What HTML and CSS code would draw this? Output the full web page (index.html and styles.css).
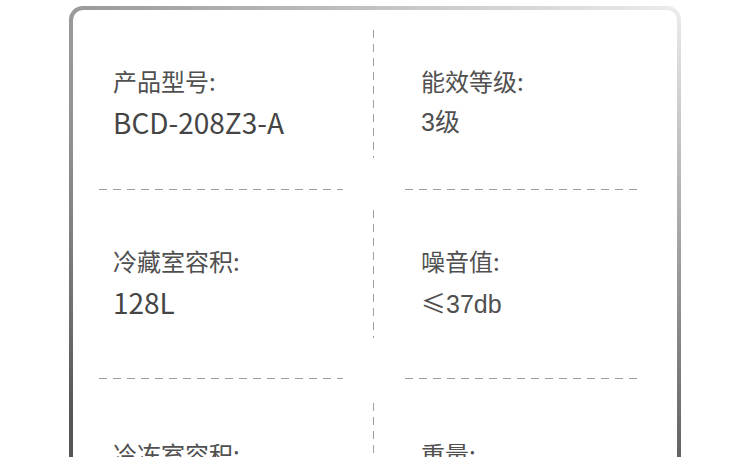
FILE: index.html
```html
<!DOCTYPE html>
<html lang="zh-CN">
<head>
    <meta charset="UTF-8">
    <meta name="viewport" content="width=device-width, initial-scale=1.0">
    <title>产品参数</title>
    <link rel="stylesheet" href="styles.css">
</head>
<body>
    <div class="spec-card">
        <div class="spec-row first">
            <div class="spec-cell">
                <div class="spec-label">产品型号:</div>
                <div class="spec-value">BCD-208Z3-A</div>
            </div>
            <div class="v-divider"></div>
            <div class="spec-cell alt">
                <div class="spec-label">能效等级:</div>
                <div class="spec-value">3级</div>
            </div>
        </div>
        <div class="spec-sep"><span class="h-line"></span><span class="h-line"></span></div>

        <div class="spec-row">
            <div class="spec-cell">
                <div class="spec-label">冷藏室容积:</div>
                <div class="spec-value">128L</div>
            </div>
            <div class="v-divider"></div>
            <div class="spec-cell alt">
                <div class="spec-label">噪音值:</div>
                <div class="spec-value"><span class="sym">≤</span>37db</div>
            </div>
        </div>
        <div class="spec-sep"><span class="h-line"></span><span class="h-line"></span></div>

        <div class="spec-row last">
            <div class="spec-cell">
                <div class="spec-label">冷冻室容积:</div>
                <div class="spec-value">80L</div>
            </div>
            <div class="v-divider"></div>
            <div class="spec-cell alt">
                <div class="spec-label">重量:</div>
                <div class="spec-value">52kg</div>
            </div>
        </div>
    </div>
</body>
</html>
```

FILE: styles.css
```css
html, body {
    margin: 0;
    background: #fff;
    overflow: hidden;
}

body {
    font-family: "Noto Sans CJK SC", sans-serif;
    color: #4d4d4d;
}

.spec-card {
    box-sizing: border-box;
    width: 612px;
    margin: 6px auto 0;
    padding: 0 35px 30px 26px;
    border: 4px solid transparent;
    border-radius: 14px;
    /* light at the top right, darker toward the bottom left */
    background:
        linear-gradient(#fff, #fff) padding-box,
        radial-gradient(1113px 494px at 100% 0, #ececec 0%, #555 100%) border-box;
}

.spec-row {
    display: flex;
    align-items: flex-start;
    padding: 20px 0 40px;
}

.spec-row.first {
    padding-bottom: 31px;
}

.spec-row.last {
    padding-top: 24px;
}

.spec-cell {
    width: 274px;
    box-sizing: border-box;
    padding: 35px 0 0 14px;
}

.spec-cell.alt {
    flex: 1;
    width: auto;
    padding-left: 47px;
    font-family: "Liberation Sans", "Noto Sans CJK SC", sans-serif;
}

.v-divider {
    width: 1px;
    height: 128px;
    background: repeating-linear-gradient(to bottom, #a0a0a0 0 8px, transparent 8px 14px);
}

.spec-label {
    font-size: 24px;
    line-height: 32px;
    color: #505050;
}

.spec-cell.alt .spec-label {
    font-family: "Noto Sans CJK SC", sans-serif;
}

.spec-value {
    margin-top: 7px;
    font-size: 28px;
    line-height: 36px;
    color: #454545;
}

.spec-cell.alt .spec-value {
    font-size: 25px;
    color: #505050;
}

.sym {
    font-family: "Noto Sans CJK SC", sans-serif;
}

.spec-sep {
    display: flex;
    gap: 62px;
}

.h-line {
    height: 1px;
    width: 244px;
    background: repeating-linear-gradient(to right, #a0a0a0 0 8px, transparent 8px 14px);
}

.h-line + .h-line {
    width: 237px;
}
```
